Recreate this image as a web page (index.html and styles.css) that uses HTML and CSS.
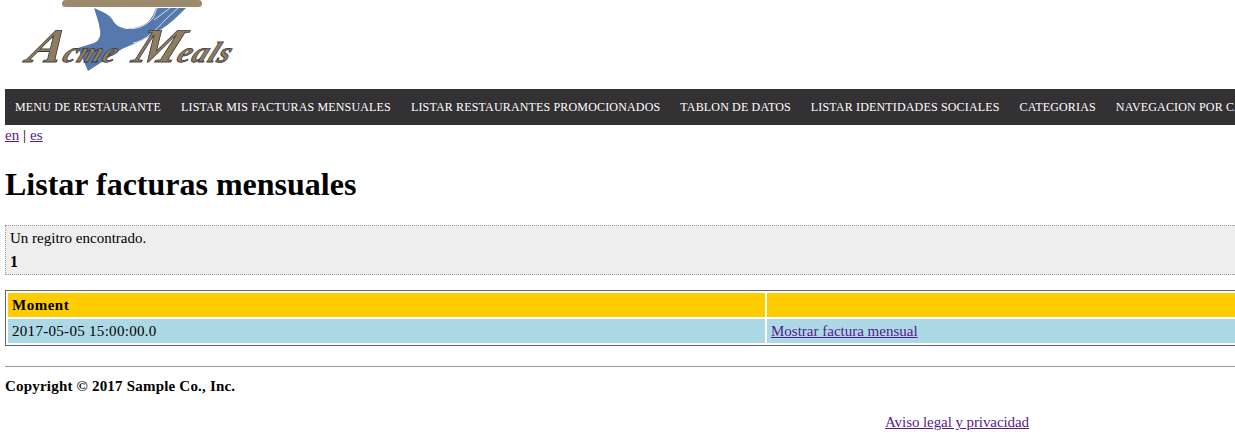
FILE: index.html
```html
<!DOCTYPE html>
<html lang="en">
<head>
    <meta charset="UTF-8">
    <title>Listar facturas mensuales</title>
    <link rel="stylesheet" href="styles.css">
</head>
<body>
    <div class="banner">
        <svg class="logo" width="240" height="89" viewBox="0 0 240 89">
            <rect x="67" y="-4" width="130" height="6" fill="#5b64a0"/>
            <path d="M94 8 C100 11 108 13 112 19 C115 25 120 28 127 29 C134 29 143 26 148 22 C152 18 154 13 156 8 L186 8 C178 16 170 24 160 30 C148 38 134 44 122 49 L88 71 L78 48 L94 43 C99 41 101 36 100 30 C99 22 96 15 94 8 Z" fill="#5578ad"/>
            <path d="M128 28 C136 30 146 26 153 18 L157 8 M133 43 C145 41 155 31 166 19 L178 8 M154 20 L170 8" fill="none" stroke="#d5deeb" stroke-width="1"/>
            <rect x="62" y="0" width="140" height="7" rx="3.5" fill="#9c8a6c"/>
            <text class="logo-text" transform="translate(25 62) skewX(-24) scale(1.05 1)"><tspan class="logo-cap">A</tspan><tspan dx="1">cme</tspan><tspan class="logo-cap" dx="15">M</tspan><tspan dx="-1">eals</tspan></text>
        </svg>
    </div>

    <ul class="menu">
        <li><a href="#">Menu de restaurante</a></li>
        <li><a href="#">Listar mis facturas mensuales</a></li>
        <li><a href="#">Listar restaurantes promocionados</a></li>
        <li><a href="#">Tablon de datos</a></li>
        <li><a href="#">Listar identidades sociales</a></li>
        <li><a href="#">Categorias</a></li>
        <li><a href="#">Navegacion por categorias</a></li>
    </ul>

    <div class="lang"><a href="#">en</a> | <a href="#">es</a></div>

    <h1>Listar facturas mensuales</h1>

    <div class="pagebanner">
        <div>Un regitro encontrado.</div>
        <div class="pagelinks">1</div>
    </div>

    <table class="displaytag">
        <thead>
            <tr>
                <th>Moment</th>
                <th></th>
            </tr>
        </thead>
        <tbody>
            <tr>
                <td class="moment">2017-05-05 15:00:00.0</td>
                <td><a href="#">Mostrar factura mensual</a></td>
            </tr>
        </tbody>
    </table>

    <hr>

    <p class="copyright">Copyright &copy; 2017 Sample Co., Inc.</p>
    <div class="legal"><a href="#">Aviso legal y privacidad</a></div>
</body>
</html>
```

FILE: styles.css
```css
/* Page */
html {
    overflow: hidden;
}
body {
    margin: 0 0 0 5px;
    width: 1904px;
    font-family: "Liberation Serif", "Times New Roman", serif;
    font-size: 15px;
    color: black;
}
a {
    color: #551a8b;
}

/* Logo */
.banner {
    height: 89px;
}
.logo {
    display: block;
    margin-left: -5px;
}
.logo-text {
    font-family: "Liberation Serif", serif;
    font-style: italic;
    font-weight: bold;
    font-size: 29px;
    letter-spacing: 1px;
    fill: #8f7d61;
    stroke: #3a3a3a;
    stroke-width: 0.8;
}
.logo-cap {
    font-size: 48px;
}

/* Menu bar */
.menu {
    display: flex;
    margin: 0;
    padding: 0;
    height: 36px;
    list-style: none;
    background-color: #333134;
    white-space: nowrap;
}
.menu a {
    display: block;
    padding: 0 10px;
    line-height: 36px;
    font-size: 12px;
    letter-spacing: 0.16px;
    color: white;
    text-decoration: none;
    text-transform: uppercase;
}

.lang {
    margin-top: 2px;
    line-height: 17px;
    word-spacing: 0.2px;
}

h1 {
    margin: 22px 0 23px;
    font-size: 32px;
    line-height: 36px;
}

/* Results banner */
.pagebanner {
    padding: 4px;
    height: 40px;
    border: 1px dotted #999;
    background-color: #eee;
    line-height: 17px;
}
.pagelinks {
    margin-top: 6px;
    font-weight: bold;
    font-size: 16px;
}

/* Results table */
.displaytag {
    margin-top: 15px;
    width: 1522px;
    table-layout: fixed;
    border: 1px solid #666;
    border-spacing: 2px;
}
.displaytag th, .displaytag td {
    padding: 0 4px;
    height: 24px;
    text-align: left;
}
.displaytag th {
    background-color: #fc0;
    letter-spacing: 0.5px;
}
.displaytag td {
    background-color: lightblue;
}
.displaytag .moment {
    letter-spacing: 0.3px;
}

hr {
    margin: 20px 0 0;
    height: 0;
    border: none;
    border-top: 1px solid #999;
}

.copyright {
    margin: 11px 0 0;
    font-weight: bold;
    line-height: 17px;
    letter-spacing: 0.2px;
}
.legal {
    margin-top: 19px;
    text-align: center;
    line-height: 17px;
    letter-spacing: -0.08px;
}
```
